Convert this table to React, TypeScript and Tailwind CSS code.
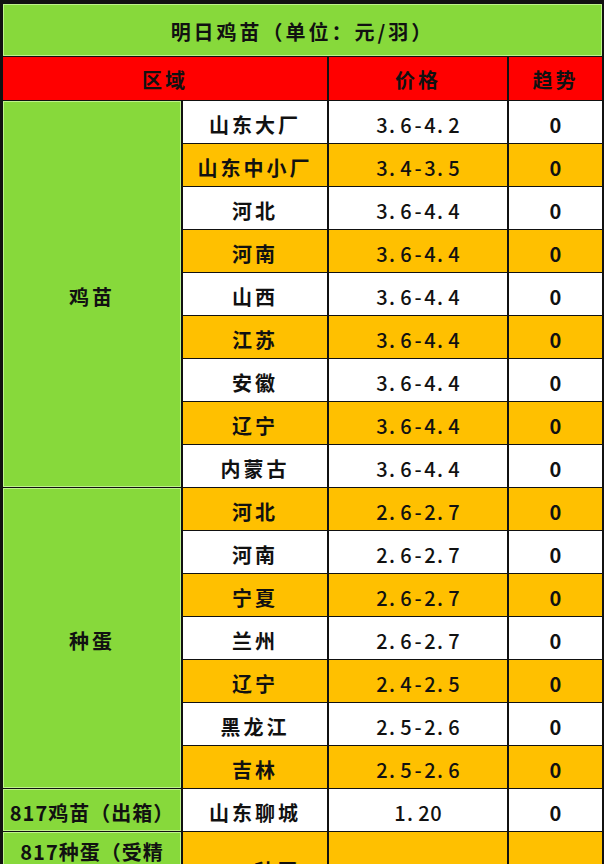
import type { ReactNode } from "react";

const chickRows = [
  ["山东大厂", "3.6-4.2"],
  ["山东中小厂", "3.4-3.5"],
  ["河北", "3.6-4.4"],
  ["河南", "3.6-4.4"],
  ["山西", "3.6-4.4"],
  ["江苏", "3.6-4.4"],
  ["安徽", "3.6-4.4"],
  ["辽宁", "3.6-4.4"],
  ["内蒙古", "3.6-4.4"],
];

const eggRows = [
  ["河北", "2.6-2.7"],
  ["河南", "2.6-2.7"],
  ["宁夏", "2.6-2.7"],
  ["兰州", "2.6-2.7"],
  ["辽宁", "2.4-2.5"],
  ["黑龙江", "2.5-2.6"],
  ["吉林", "2.5-2.6"],
];

const cjk = "font-['Noto_Sans_CJK_SC',sans-serif]";
const green = "bg-[#87d93b] shadow-[inset_0_0_0_1px_#bff38a]";

function Cell({ className = "", children }: { className?: string; children?: ReactNode }) {
  return <div className={`flex items-center justify-center text-center text-[#111] ${className}`}>{children}</div>;
}

// half-width digits in fixed 12px slots, like the sheet's font
function Price({ value }: { value: string }) {
  return (
    <span className="flex">
      {value.split("").map((c, i) => (
        <span key={i} className={`inline-block w-[12px] ${c === "." ? "pl-[1px] text-left" : "text-center"}`}>
          {c}
        </span>
      ))}
    </span>
  );
}

function DataRow({ name, price, index, tall = false }: { name: string; price: string; index: number; tall?: boolean }) {
  const bg = index % 2 === 0 ? "bg-white" : "bg-[#ffc000]";
  const h = tall ? "h-[72px]" : "h-[42px]";
  return (
    <>
      <Cell className={`col-start-2 ${h} ${bg} pt-[5px] ${cjk} text-[20px] font-bold tracking-[3px]`}>{name}</Cell>
      <Cell className={`col-start-3 ${h} ${bg} pt-[5px] ${cjk} text-[20px] font-medium`}>
        <Price value={price} />
      </Cell>
      <Cell className={`col-start-4 ${h} ${bg} pt-[5px] ${cjk} text-[20px] font-bold`}>0</Cell>
    </>
  );
}

export default function App() {
  return (
    <div className="w-[608px] bg-white">
      <div className="grid w-[604px] grid-cols-[178px_144px_178px_93px] gap-x-[2px] gap-y-px bg-[#111] pl-[3px] pr-[2px] pt-[4px]">
        <Cell className={`col-span-4 h-[52px] pt-[3px] ${green} ${cjk} text-[20px] font-bold tracking-[3px]`}>
          明日鸡苗（单位：元/羽）
        </Cell>

        <Cell className={`col-span-2 h-[43px] pt-[2px] bg-[#ff0000] ${cjk} text-[20px] font-bold tracking-[3px] text-[#2a0000]`}>区域</Cell>
        <Cell className={`h-[43px] pt-[2px] bg-[#ff0000] ${cjk} text-[20px] font-bold tracking-[3px] text-[#2a0000]`}>价格</Cell>
        <Cell className={`h-[43px] pt-[2px] bg-[#ff0000] ${cjk} text-[20px] font-bold tracking-[3px] text-[#2a0000]`}>趋势</Cell>

        <Cell className={`col-start-1 row-span-9 pt-[5px] ${green} ${cjk} text-[20px] font-bold tracking-[3px]`}>鸡苗</Cell>
        {chickRows.map(([name, price], i) => (
          <DataRow key={"c" + i} name={name} price={price} index={i} />
        ))}

        <Cell className={`col-start-1 row-span-7 pt-[5px] ${green} ${cjk} text-[20px] font-bold tracking-[3px]`}>种蛋</Cell>
        {eggRows.map(([name, price], i) => (
          <DataRow key={"e" + i} name={name} price={price} index={i + 9} />
        ))}

        <Cell className={`col-start-1 pt-[5px] ${green} ${cjk} text-[20px] font-bold tracking-[1px]`}>817鸡苗（出箱）</Cell>
        <DataRow name="山东聊城" price="1.20" index={16} />

        <Cell className={`col-start-1 ${green} ${cjk} text-[20px] font-bold leading-[32px] tracking-[1px]`}>
          817种蛋（受精
          <br />
          蛋）
        </Cell>
        <DataRow name="817种蛋" price="2.50-2.55" index={17} tall />
      </div>
    </div>
  );
}
